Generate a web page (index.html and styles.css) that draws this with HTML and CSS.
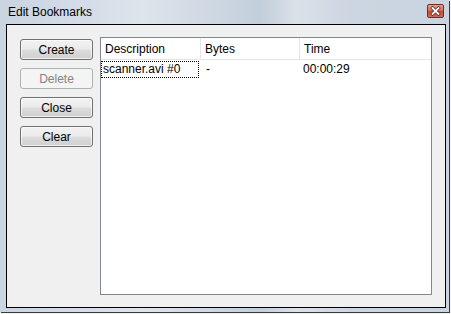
FILE: index.html
```html
<!DOCTYPE html>
<html>
<head>
<meta charset="utf-8">
<link rel="stylesheet" href="styles.css">
</head>
<body>
<div class="window">
  <div class="titlebar">
    <span class="title">Edit Bookmarks</span>
    <span class="close">
      <svg width="15" height="12" viewBox="0 0 15 12">
        <path d="M4.5 3 L10.5 9 M10.5 3 L4.5 9" stroke="#5a2020" stroke-width="3.2" stroke-linecap="square"/>
        <path d="M4.5 3 L10.5 9 M10.5 3 L4.5 9" stroke="#ffffff" stroke-width="1.8" stroke-linecap="square"/>
      </svg>
    </span>
  </div>
  <div class="client">
    <div class="buttons">
      <button class="btn">Create</button>
      <button class="btn" disabled>Delete</button>
      <button class="btn">Close</button>
      <button class="btn">Clear</button>
    </div>
    <div class="list">
      <div class="header">
        <div class="col c1">Description</div>
        <div class="col c2">Bytes</div>
        <div class="col c3">Time</div>
      </div>
      <div class="row">
        <div class="cell c1"><span class="focus">scanner.avi #0</span></div>
        <div class="cell c2">-</div>
        <div class="cell c3">00:00:29</div>
      </div>
    </div>
  </div>
</div>
</body>
</html>
```
FILE: styles.css
```css
html, body {
  margin: 0;
  padding: 0;
  background: #f4f4f4;
}
body {
  width: 451px;
  height: 314px;
  overflow: hidden;
  font-family: "Liberation Sans", Arial, sans-serif;
  font-size: 12px;
  color: #000;
}
.window {
  width: 449px;
  height: 312px;
  box-sizing: border-box;
  background: linear-gradient(90deg, #cad5e2 0%, #d3dce7 18%, #dde4ec 32%, #cdd7e2 48%, #c2cedb 58%, #dae1e9 66%, #ccd6e1 78%, #c9d4e0 100%);
  box-shadow: 1px 1px 0 #3a3a3a;
  display: flex;
  flex-direction: column;
  padding: 0 3px 4px 6px;
}
.titlebar {
  height: 24px;
  display: flex;
  align-items: center;
  justify-content: space-between;
  padding: 0 2px 0 2px;
}
.title {
  font-size: 12px;
  color: #000;
  margin-top: -1px;
}
.close {
  width: 15px;
  height: 12px;
  border: 1px solid #6e2f2a;
  border-radius: 2px;
  background: linear-gradient(180deg, #e8a08c 0%, #d5715a 45%, #c24a30 55%, #d4704e 100%);
  display: flex;
  margin-top: -3px;
}
.close svg { display: block; }
.client {
  flex: 1;
  border: 1px solid #000;
  background: #f0f0f0;
  display: flex;
  gap: 7px;
  padding: 12px 13px 12px 13px;
}
.buttons {
  width: 73px;
  display: flex;
  flex-direction: column;
  gap: 8px;
  padding-top: 2px;
}
.btn {
  width: 73px;
  height: 21px;
  box-sizing: border-box;
  border: 1px solid #707070;
  border-radius: 3px;
  background: linear-gradient(180deg, #f2f2f2 0%, #ebebeb 48%, #dddddd 52%, #cfcfcf 100%);
  box-shadow: inset 0 0 0 1px rgba(255,255,255,0.7);
  font-family: "Liberation Sans", Arial, sans-serif;
  font-size: 12px;
  color: #000;
  padding: 0;
  margin: 0;
}
.btn:disabled {
  border-color: #adb2b5;
  background: #f4f4f4;
  color: #838383;
  box-shadow: none;
}
.list {
  flex: 1;
  background: #fff;
  border: 1px solid #828790;
}
.header {
  display: flex;
  height: 21px;
  border-bottom: 1px solid #e5e5e5;
}
.col {
  height: 21px;
  line-height: 23px;
  padding-left: 4px;
  box-sizing: border-box;
  border-right: 1px solid #e5e5e5;
}
.col.c3 { border-right: none; flex: 1; }
.c1 { width: 100px; }
.c2 { width: 99px; }
.c3 { flex: 1; }
.row {
  display: flex;
  height: 17px;
  margin-top: 1px;
}
.cell {
  box-sizing: border-box;
  line-height: 16px;
}
.cell.c1 { padding-left: 0; }
.focus {
  display: block;
  width: 98px;
  height: 17px;
  box-sizing: border-box;
  border: 1px dotted #000;
  padding-left: 1px;
  line-height: 15px;
}
.cell.c2 { padding-left: 5px; }
.cell.c3 { padding-left: 3px; }
```
